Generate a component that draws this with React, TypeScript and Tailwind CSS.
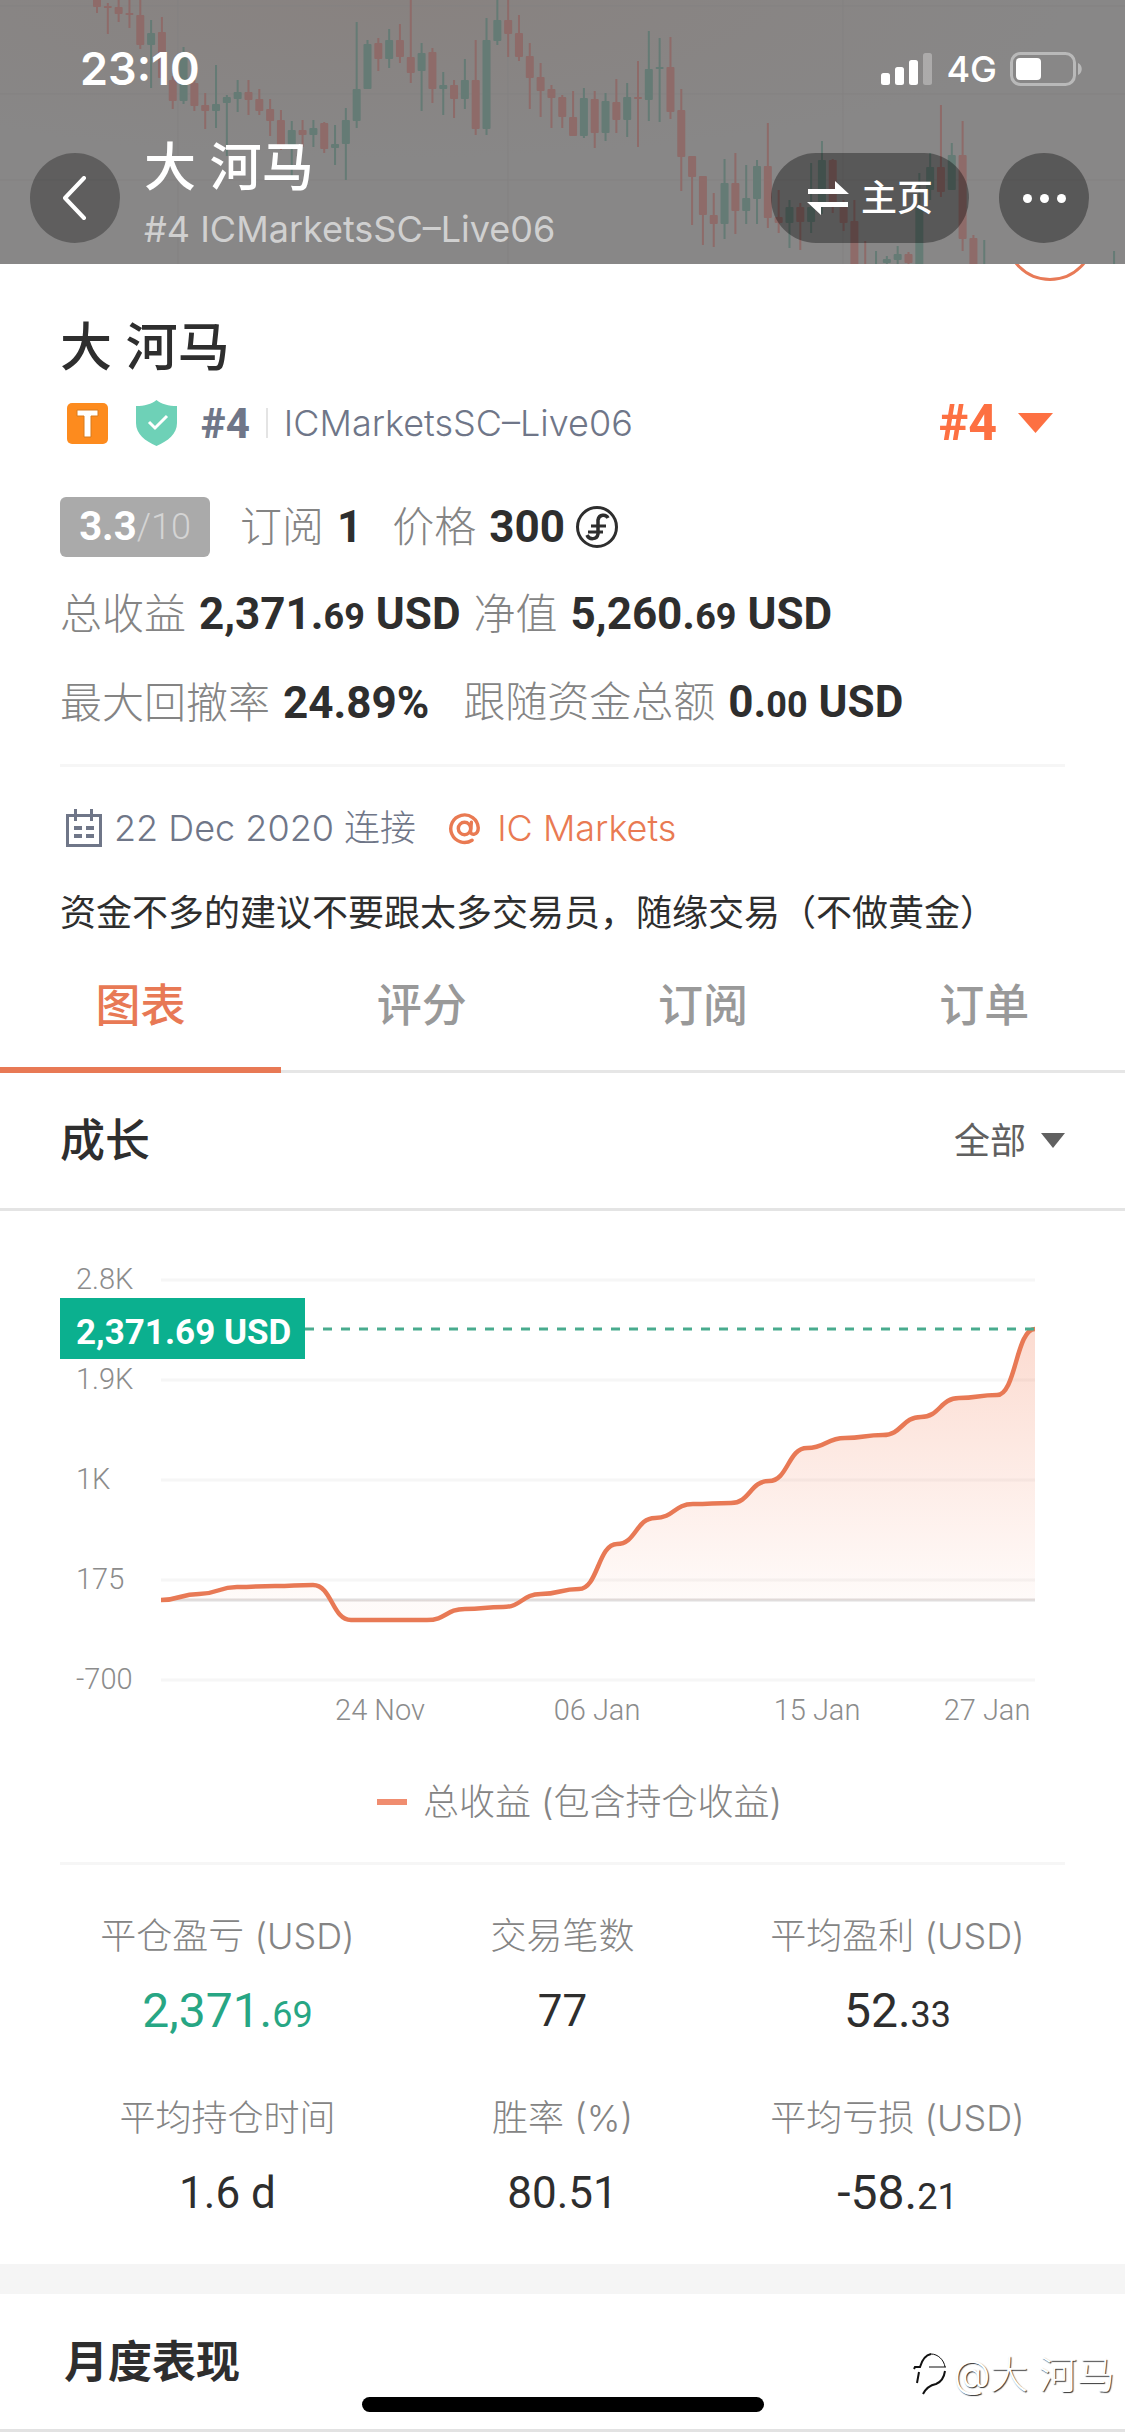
import { useState, type ReactNode } from 'react'

type Candle = [slot: number, up: 0 | 1, high: number, top: number, bottom: number, low: number]

const CANDLES: Candle[] = [
  [0, 0, -4, -4, 7, 13], [1, 0, 3, 6, 8, 34], [2, 0, -4, 7, 14, 22], [3, 0, -4, 13, 15, 28],
  [4, 0, -4, 15, 45, 49], [5, 1, 20, 33, 45, 88], [6, 0, 17, 32, 78, 82], [7, 0, 76, 80, 101, 109],
  [8, 1, 47, 54, 101, 104], [9, 0, 80, 83, 106, 111], [10, 0, 93, 105, 111, 129], [11, 1, 65, 104, 111, 128],
  [12, 1, 95, 97, 103, 156], [13, 1, 80, 92, 99, 112], [14, 0, 80, 92, 100, 115], [15, 0, 89, 99, 111, 115],
  [16, 0, 99, 109, 121, 136], [17, 0, 110, 120, 147, 150], [18, 1, 121, 130, 147, 177], [19, 0, 120, 130, 135, 147],
  [20, 1, 120, 128, 135, 147], [21, 0, 122, 123, 149, 153], [22, 1, 125, 144, 148, 165], [23, 1, 108, 120, 144, 180],
  [24, 1, 22, 89, 121, 128], [25, 1, 40, 44, 89, 89], [26, 0, 38, 43, 59, 71], [27, 1, 29, 40, 59, 68],
  [28, 0, 24, 40, 57, 63], [29, 0, -4, 57, 73, 83], [30, 1, 43, 53, 71, 111], [31, 0, 48, 52, 89, 103],
  [32, 1, 72, 85, 89, 115], [33, 0, 80, 85, 99, 118], [34, 1, 59, 80, 99, 109], [35, 0, 40, 80, 129, 135],
  [36, 1, 18, 40, 129, 135], [37, 1, -4, 20, 41, 45], [38, 0, -4, 20, 34, 57], [39, 0, 15, 33, 57, 61],
  [40, 0, 43, 56, 78, 109], [41, 0, 63, 77, 91, 117], [42, 0, 85, 89, 98, 128], [43, 0, 95, 97, 117, 128],
  [44, 0, 91, 117, 136, 136], [45, 1, 88, 98, 136, 138], [46, 0, 91, 99, 133, 148], [47, 1, 93, 101, 133, 141],
  [48, 0, 79, 102, 120, 133], [49, 1, 83, 97, 120, 137], [50, 0, 61, 97, 99, 147], [51, 1, 31, 69, 100, 121],
  [52, 1, 38, 67, 69, 122], [53, 0, 37, 67, 112, 119], [54, 0, 89, 110, 157, 191], [55, 0, 156, 156, 177, 225],
  [56, 0, 176, 176, 215, 245], [57, 0, 193, 215, 224, 247], [58, 1, 159, 183, 224, 239], [59, 0, 153, 183, 211, 234],
  [60, 1, 165, 198, 211, 224], [61, 1, 160, 166, 199, 224], [62, 0, 123, 166, 218, 228], [63, 0, 190, 217, 223, 233],
  [64, 1, 200, 207, 223, 248], [65, 0, 203, 207, 222, 250], [66, 1, 163, 207, 222, 233], [67, 1, 141, 160, 207, 214],
  [68, 0, 159, 160, 207, 213], [69, 0, 200, 207, 223, 231], [70, 0, 200, 221, 268, 268], [71, 0, 241, 268, 268, 268],
  [72, 1, 251, 268, 268, 268], [73, 1, 256, 259, 263, 268], [74, 1, 246, 254, 260, 268], [75, 0, 252, 254, 263, 268],
  [76, 1, 173, 206, 268, 268], [77, 1, 153, 167, 190, 200], [78, 0, 105, 167, 192, 197], [79, 1, 143, 155, 190, 190],
  [80, 0, 121, 155, 239, 251], [81, 0, 235, 238, 268, 268], [82, 1, 240, 268, 268, 268], [94, 1, 251, 268, 268, 268],
]

const PLOT = { left: 161, right: 1035, zero: 1600, step: 38 }

// plot heights of the growth curve, one per step
const GROWTH = [
  1600, 1594, 1587, 1586, 1585, 1620, 1620, 1620, 1609, 1607, 1594, 1589,
  1544, 1518, 1504, 1503, 1481, 1448, 1438, 1435, 1417, 1398, 1395, 1329,
]

const GROWTH_LINE = GROWTH.map((y, i) => {
  const x = PLOT.left + i * PLOT.step
  if (i === 0) return `M${x} ${y}`
  const mid = x - PLOT.step / 2
  return `C${mid} ${GROWTH[i - 1]} ${mid} ${y} ${x} ${y}`
}).join('')

const Y_TICKS = [
  { label: '2.8K', y: 1280 },
  { label: '1.9K', y: 1380 },
  { label: '1K', y: 1480 },
  { label: '175', y: 1580 },
  { label: '-700', y: 1680 },
]

const X_TICKS = [
  { label: '24 Nov', x: 380 },
  { label: '06 Jan', x: 597 },
  { label: '15 Jan', x: 817 },
  { label: '27 Jan', x: 987 },
]

const TABS = ['图表', '评分', '订阅', '订单']

const STATS = [
  { label: '平仓盈亏 (USD)', value: '2,371.', cents: '69', positive: true },
  { label: '交易笔数', value: '77' },
  { label: '平均盈利 (USD)', value: '52.', cents: '33' },
  { label: '平均持仓时间', value: '1.6 d' },
  { label: '胜率 (%)', value: '80.51' },
  { label: '平均亏损 (USD)', value: '-58.', cents: '21' },
]

function CandleBackdrop() {
  return (
    <svg
      className="absolute inset-0 h-full w-full"
      viewBox="0 0 1125 264"
      preserveAspectRatio="xMidYMid slice"
      aria-hidden="true"
    >
      <defs>
        <radialGradient id="warm" cx="35%" cy="0%" r="60%">
          <stop offset="0" stopColor="#888280" />
          <stop offset="1" stopColor="#888787" />
        </radialGradient>
      </defs>
      <rect width="1125" height="264" fill="url(#warm)" />
      <path d="M0 6H1125M0 94H1125M0 180H1125M178 0V264M508 0V264M843 0V264" stroke="#838181" strokeWidth="1" />
      {CANDLES.map(([slot, up, high, top, bottom, low]) => {
        const x = 97 + slot * 10.82
        return (
          <g key={slot} fill={up ? '#657b75' : '#8e6b69'}>
            <rect x={x - 1} y={high} width="2" height={low - high} />
            <rect x={x - 4} y={top} width="8" height={bottom - top} rx="1" />
          </g>
        )
      })}
    </svg>
  )
}

function StatusBar() {
  return (
    <div className="flex items-center justify-between pt-[42px] pr-[42px] pl-[80px]">
      <span className="text-[45px] leading-[54px] font-semibold">23:10</span>
      <div className="flex items-center gap-[13px]">
        <svg width="52" height="34" viewBox="0 0 52 34" fill="#fff" aria-hidden="true">
          <rect x="0" y="21" width="9" height="12" rx="2.5" />
          <rect x="14" y="15" width="9" height="18" rx="2.5" />
          <rect x="28" y="8" width="9" height="25" rx="2.5" />
          <rect x="42" y="1" width="9" height="32" rx="2.5" opacity=".3" />
        </svg>
        <span className="text-[36px] leading-[54px] font-medium">4G</span>
        <svg width="73" height="36" viewBox="0 0 73 36" aria-hidden="true">
          <rect x="1.5" y="2.5" width="63" height="31" rx="9" fill="none" stroke="#b9b9b9" strokeWidth="3" />
          <path d="M68 12c5 2 5 10 0 12z" fill="#b9b9b9" />
          <rect x="6" y="7" width="25" height="22" rx="4" fill="#fff" />
        </svg>
      </div>
    </div>
  )
}

function TopBar() {
  return (
    <header className="relative overflow-hidden pb-[5px] text-white">
      <CandleBackdrop />
      <div className="relative">
        <StatusBar />
        <div className="flex items-center pt-[41px] pr-[36px] pl-[30px]">
          <button aria-label="返回" className="flex size-[90px] items-center justify-center rounded-full bg-black/30">
            <svg width="24" height="44" viewBox="0 0 24 44" fill="none" stroke="#fff" strokeWidth="4" strokeLinecap="round" strokeLinejoin="round">
              <path d="M21 2 2 22l19 20" />
            </svg>
          </button>
          <div className="ml-6 min-w-0 flex-1">
            <div className="text-[52px] leading-[62px] font-medium">大 河马</div>
            <div className="text-[36px] leading-[60px] text-[#d0d0d0]">#4 ICMarketsSC–Live06</div>
          </div>
          <button className="flex h-[90px] w-[198px] items-center justify-center gap-3 rounded-full bg-black/35 text-[36px] font-medium">
            <svg width="42" height="36" viewBox="0 0 42 36" fill="#fff" aria-hidden="true">
              <path d="M1 9h27V1l14 13H1z" />
              <path d="M41 27H14v8L0 22h41z" />
            </svg>
            主页
          </button>
          <button aria-label="更多" className="ml-[30px] flex size-[90px] items-center justify-center gap-2 rounded-full bg-black/35">
            <span className="size-[9px] rounded-full bg-white" />
            <span className="size-[9px] rounded-full bg-white" />
            <span className="size-[9px] rounded-full bg-white" />
          </button>
        </div>
      </div>
    </header>
  )
}

function Metric({ label, children }: { label: string; children: ReactNode }) {
  return (
    <div className="flex items-baseline gap-[13px]">
      <span className="text-[42px] leading-[60px] font-light text-[#848484]">{label}</span>
      <span className="font-[Roboto] text-[44px] leading-[60px] font-bold">{children}</span>
    </div>
  )
}

function Cents({ children }: { children: string }) {
  return <span className="text-[36px]">{children}</span>
}

function CoinIcon() {
  return (
    <svg width="44" height="44" viewBox="0 0 44 44" fill="none" stroke="#2e2e2e" aria-hidden="true">
      <circle cx="22" cy="22" r="19.5" strokeWidth="3" />
      <path d="M33 13c-2-4-9-4-10 2v14c-1 6-9 6-11 1" strokeWidth="3.5" />
      <path d="M16 21h15M13 27h15" strokeWidth="3" />
    </svg>
  )
}

function Profile() {
  return (
    <section className="relative overflow-hidden px-[60px] pt-[52px]">
      <div className="absolute -top-[73px] right-[30px] size-[90px] rounded-full border-[3px] border-[#e87a57]" />
      <h1 className="text-[52px] leading-[64px] font-medium">大 河马</h1>

      <div className="mt-[15px] flex h-[56px] items-center">
        <svg className="ml-[7px]" width="41" height="41" viewBox="0 0 41 41" aria-hidden="true">
          <rect width="41" height="41" rx="5" fill="#fd8b1e" />
          <path d="M10 7h21v6h-7v21h-7V13h-7z" fill="#fff" stroke="#d87a1c" strokeWidth="1" />
        </svg>
        <svg className="ml-7" width="41" height="46" viewBox="0 0 41 46" aria-hidden="true">
          <path d="M20.500 0c5 4 12 6 20.500 6v17c0 11-9 18-20.500 23C9 41 0 34 0 23V6c8.500 0 15.500-2 20.500-6z" fill="#6ed1b7" />
          <path d="m13 22 6 6 12-12" fill="none" stroke="#fff" strokeWidth="3" />
        </svg>
        <span className="ml-6 font-[Roboto] text-[42px] font-extrabold text-[#6f7688]">#4</span>
        <span className="mx-4 h-[30px] w-[2px] bg-[#e4e4e4]" />
        <span className="text-[36px] font-light text-[#6f7688]">ICMarketsSC–Live06</span>
        <div className="ml-auto flex items-center gap-4 pr-[12px] text-[#fd7042]">
          <select
            aria-label="账户"
            className="h-20 appearance-none bg-transparent px-1 font-[Roboto] text-[50px] font-extrabold outline-none"
          >
            <option>#4</option>
          </select>
          <svg width="35" height="20" viewBox="0 0 35 20" fill="currentColor" aria-hidden="true">
            <path d="M0 0h35L17.500 20z" />
          </svg>
        </div>
      </div>

      <div className="mt-[46px] flex flex-col gap-7">
        <div className="flex h-[60px] items-center gap-[30px]">
          <div className="flex h-[60px] w-[150px] items-center justify-center rounded-md bg-[#aaa] font-[Roboto] text-[40px] font-bold text-white">
            3.3<span className="text-[36px] font-light text-[#d4d4d4]">/10</span>
          </div>
          <Metric label="订阅">1</Metric>
          <div className="flex items-center gap-[10px]">
            <Metric label="价格">300</Metric>
            <CoinIcon />
          </div>
        </div>
        <div className="flex h-[60px] items-center gap-[13px]">
          <Metric label="总收益">2,371.<Cents>69</Cents> USD</Metric>
          <Metric label="净值">5,260.<Cents>69</Cents> USD</Metric>
        </div>
        <div className="flex h-[60px] items-center gap-[34px]">
          <Metric label="最大回撤率">24.89%</Metric>
          <Metric label="跟随资金总额">0.<Cents>00</Cents> USD</Metric>
        </div>
      </div>

      <div className="mt-[31px] flex h-[88px] items-center border-t-[3px] border-[#f6f6f6] pt-[37px] text-[36px] font-light text-[#6f7688]">
        <svg className="ml-[6px]" width="36" height="38" viewBox="0 0 36 38" fill="none" stroke="#6f7688" strokeWidth="3" aria-hidden="true">
          <rect x="1.500" y="6.500" width="33" height="30" />
          <path d="M9.500 0v12M25.500 0v12" />
          <path d="M8 19h8M20 19h8M8 27h8M20 27h8" strokeWidth="4" />
        </svg>
        <span className="ml-3">22 Dec 2020 连接</span>
        <a href="#broker" className="ml-8 flex items-center gap-4 text-[#e97a52]">
          <svg width="33" height="33" viewBox="0 0 24 24" fill="none" stroke="currentColor" strokeWidth="2.500" strokeLinecap="round" aria-hidden="true">
            <circle cx="12" cy="12" r="4.500" />
            <path d="M17 7.500l-.6 6.500c0 3.500 5.600 3 5.600-2.500A10 10 0 1 0 17.500 20.500" />
          </svg>
          IC Markets
        </a>
      </div>
      <p className="mt-[37px] text-[36px] leading-[48px]">资金不多的建议不要跟太多交易员，随缘交易（不做黄金）</p>
    </section>
  )
}

function Tabs() {
  const [active, setActive] = useState(TABS[0])
  return (
    <nav className="grid grid-cols-4 text-[45px] leading-[54px] font-medium">
      {TABS.map((tab) => (
        <button
          key={tab}
          onClick={() => setActive(tab)}
          className={
            tab === active
              ? 'border-b-[6px] border-[#e87955] pt-[42px] pb-[34px] text-[#e87955]'
              : 'border-b-[3px] border-[#e6e6e6] pt-[42px] pb-[37px] text-[#999]'
          }
        >
          {tab}
        </button>
      ))}
    </nav>
  )
}

function GrowthChart() {
  return (
    <svg className="block h-auto w-full" viewBox="0 1211 1125 529" fontFamily="Roboto" role="img" aria-label="成长">
      <defs>
        <linearGradient id="area" x1="0" y1="1329" x2="0" y2="1600" gradientUnits="userSpaceOnUse">
          <stop offset="0" stopColor="#f2693c" stopOpacity=".24" />
          <stop offset="1" stopColor="#f2693c" stopOpacity=".03" />
        </linearGradient>
      </defs>
      {Y_TICKS.map(({ label, y }) => (
        <g key={label}>
          <line x1={PLOT.left} x2={PLOT.right} y1={y} y2={y} stroke="#f6f6f6" strokeWidth="3" />
          <text x="76" y={y + 9} fontSize="29" fontWeight="300" fill="#8c8c8c">{label}</text>
        </g>
      ))}
      <line x1={PLOT.left} x2={PLOT.right} y1={PLOT.zero} y2={PLOT.zero} stroke="#e0dddd" strokeWidth="3" />
      <path d={`${GROWTH_LINE}V${PLOT.zero}H${PLOT.left}Z`} fill="url(#area)" />
      <path d={GROWTH_LINE} fill="none" stroke="#e87955" strokeWidth="4.500" strokeLinejoin="round" />
      <line x1="305" x2={PLOT.right} y1="1329" y2="1329" stroke="#49ab8e" strokeWidth="3" strokeDasharray="9 9" />
      <rect x="60" y="1298" width="245" height="61" fill="#0bb08f" />
      <text x="76" y="1344" fontSize="35" fontWeight="700" fill="#fff">2,371.69 USD</text>
      {X_TICKS.map(({ label, x }) => (
        <text key={label} x={x} y="1720" fontSize="29" fontWeight="300" fill="#8c8c8c" textAnchor="middle">{label}</text>
      ))}
    </svg>
  )
}

function Growth() {
  return (
    <section>
      <div className="flex h-[138px] items-center justify-between border-b-[3px] border-[#e4e4e4] px-[60px]">
        <h2 className="text-[45px] leading-[60px] font-medium">成长</h2>
        <div className="flex items-center gap-[10px] text-[#606060]">
          <select aria-label="时间范围" className="h-20 appearance-none bg-transparent px-1 text-[36px] outline-none">
            <option>全部</option>
          </select>
          <svg width="24" height="15" viewBox="0 0 24 15" fill="currentColor" aria-hidden="true">
            <path d="M0 0h24L12 15z" />
          </svg>
        </div>
      </div>
      <GrowthChart />
      <div className="mt-[38px] flex items-center justify-center gap-4 pl-[34px] text-[36px] leading-[48px] font-light text-[#848484]">
        <span className="h-[6px] w-[30px] bg-[#f08d70]" />
        总收益 (包含持仓收益)
      </div>
      <dl className="mx-[60px] mt-[36px] grid grid-cols-3 gap-y-[51px] border-t-[3px] border-[#f6f6f6] pt-[47px] pb-[39px] text-center">
        {STATS.map(({ label, value, cents, positive }) => (
          <div key={label} className="flex flex-col gap-[19px]">
            <dt className="h-[48px] text-[36px] leading-[48px] font-light text-[#848484]">{label}</dt>
            <dd className={`h-[64px] font-[Roboto] leading-[64px] ${cents ? 'text-[48px]' : 'text-[44px]'} ${positive ? 'text-[#27a684]' : ''}`}>
              {value}
              {cents && <span className="text-[36px]">{cents}</span>}
            </dd>
          </div>
        ))}
      </dl>
    </section>
  )
}

function Watermark() {
  return (
    <div className="absolute right-[10px] bottom-[36px] flex items-center gap-[5px] text-[38px] leading-[52px] font-light text-white [text-shadow:1px_1px_1px_#333]">
      <svg width="35" height="44" viewBox="0 0 35 44" fill="none" stroke="#111" aria-hidden="true">
        <path d="M1 17 2 15h5C9 8 13 3 18 2" strokeWidth="2" />
        <path d="M18 2c7 0 13 6 14 13M16 15h17" strokeWidth="1" />
        <path d="M6 20 4 31M32 19c-1 7-4 11-9 13-5 1-10 4-13 10" strokeWidth="2" />
      </svg>
      @大 河马
    </div>
  )
}

export default function App() {
  return (
    <div className="relative min-h-screen bg-white font-[Inter,'Noto_Sans_CJK_SC',sans-serif] text-[#2e2e2e]">
      <TopBar />
      <main>
        <Profile />
        <Tabs />
        <Growth />
        <section className="border-t-[30px] border-b-[3px] border-t-[#f5f5f5] border-b-[#e2e2e2] px-[64px] pt-[38px] pb-[37px]">
          <h2 className="text-[44px] leading-[60px] font-bold">月度表现</h2>
        </section>
      </main>
      <Watermark />
      <div className="absolute bottom-[24px] left-1/2 h-[15px] w-[402px] -translate-x-1/2 rounded-full bg-black" />
    </div>
  )
}
